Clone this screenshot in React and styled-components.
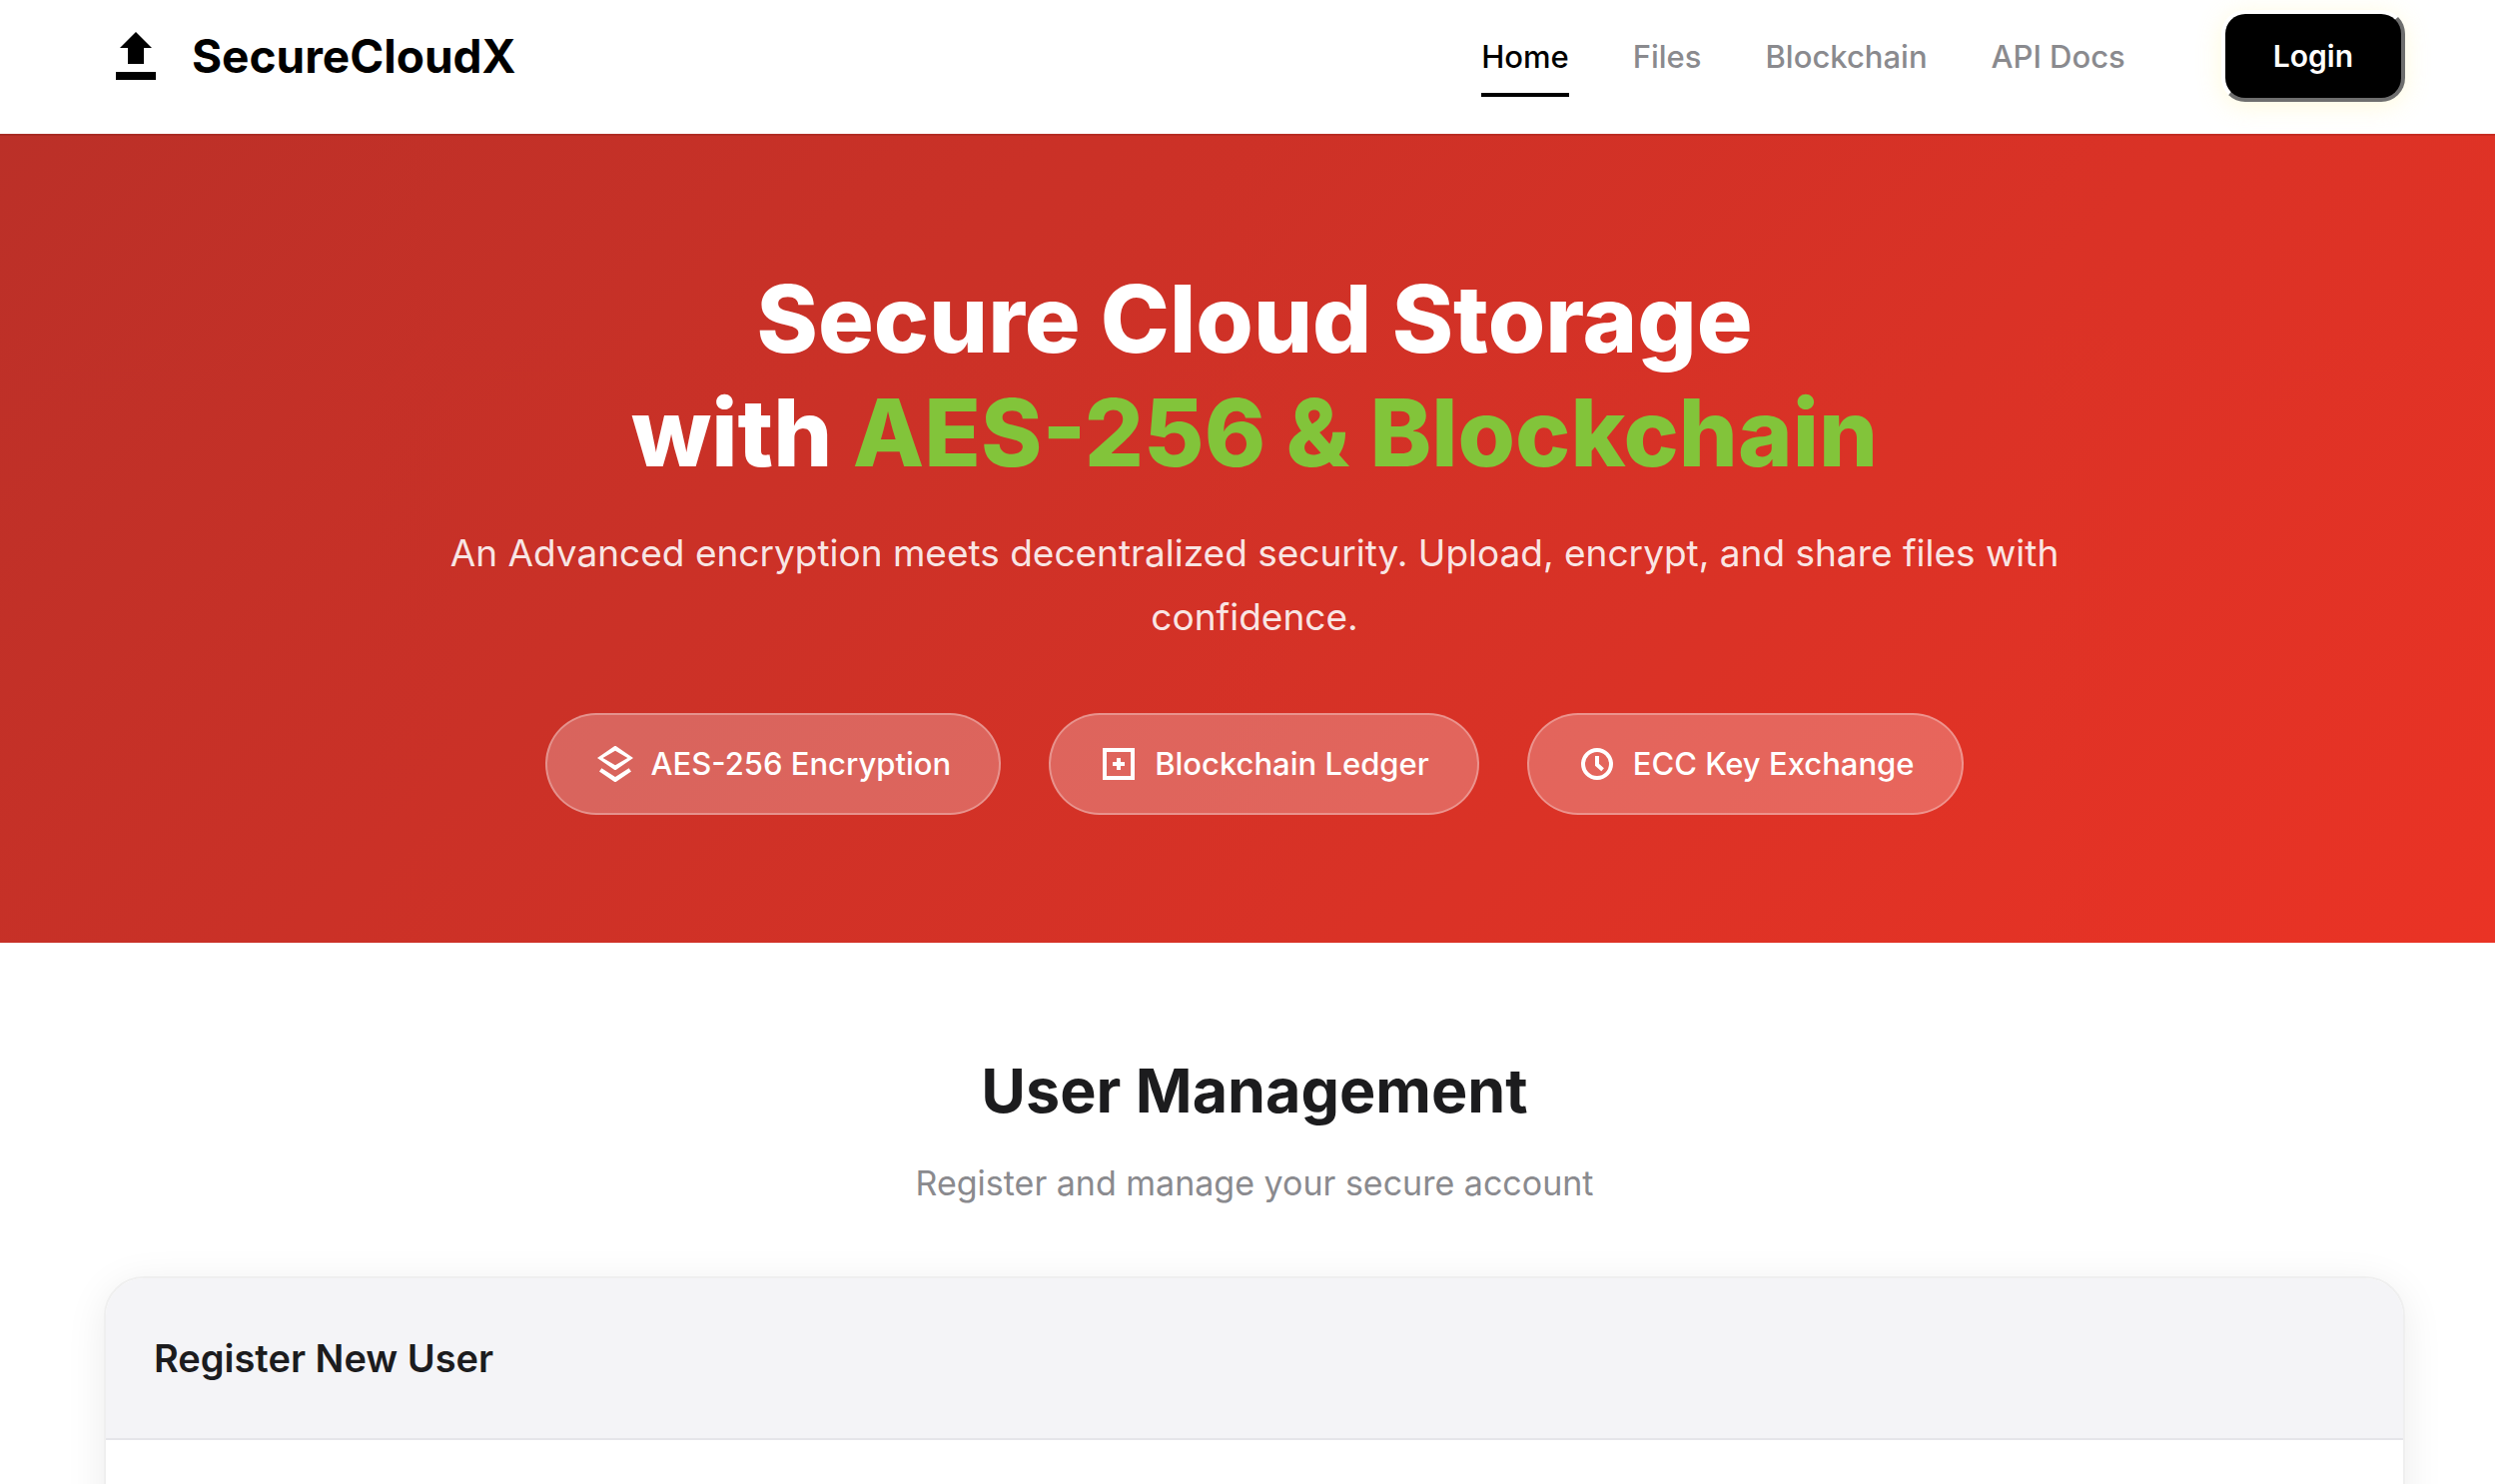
import React from "react";
import styled, { createGlobalStyle } from "styled-components";

function App() {
    return (
        <Page>
            <GlobalStyle />
            <Header>
                <Logo href="#home">
                    <LogoIcon />
                    <span>SecureCloudX</span>
                </Logo>
                <Menu>
                    <Nav>
                        <NavLink href="#home" $active>Home</NavLink>
                        <NavLink href="#files">Files</NavLink>
                        <NavLink href="#blockchain">Blockchain</NavLink>
                        <NavLink href="#docs">API Docs</NavLink>
                    </Nav>
                    <LoginButton type="button">Login</LoginButton>
                </Menu>
            </Header>
            <Hero>
                <HeroTitle>
                    Secure Cloud Storage
                    <br />
                    with <Highlight>AES-256 &amp; Blockchain</Highlight>
                </HeroTitle>
                <HeroText>
                    An Advanced encryption meets decentralized security. Upload, encrypt, and share files with confidence.
                </HeroText>
                <Features>
                    <Feature>
                        <LayersIcon />
                        <span>AES-256 Encryption</span>
                    </Feature>
                    <Feature>
                        <LedgerIcon />
                        <span>Blockchain Ledger</span>
                    </Feature>
                    <Feature>
                        <ClockIcon />
                        <span>ECC Key Exchange</span>
                    </Feature>
                </Features>
            </Hero>
            <Section>
                <SectionTitle>User Management</SectionTitle>
                <SectionText>Register and manage your secure account</SectionText>
                <Card>
                    <CardHeader>
                        <CardTitle>Register New User</CardTitle>
                    </CardHeader>
                    <CardBody />
                </Card>
            </Section>
        </Page>
    );
}

export default App;

function LogoIcon() {
    return (
        <svg width="64" height="64" viewBox="0 0 32 32" fill="currentColor" aria-hidden="true">
            <path d="M16 4l8 8h-4v8h-8v-8H8l8-8zM6 24h20v4H6v-4z" />
        </svg>
    );
}

function LayersIcon() {
    return (
        <svg width="40" height="40" viewBox="0 0 20 20" fill="currentColor" aria-hidden="true">
            <path
                fillRule="evenodd"
                d="M9.7 1h.6L19 7l-8.7 6h-.6L1 7l8.7-6zM10 3.4L3.8 7l6.2 3.6L16.2 7 10 3.4z"
            />
            <path d="M3.2 12.1L10 16.5l6.8-4.4 1.2 1.7L10.3 19h-.6L2 13.8l1.2-1.7z" />
        </svg>
    );
}

function LedgerIcon() {
    return (
        <svg width="40" height="40" viewBox="0 0 20 20" fill="none" stroke="currentColor" strokeWidth="2" aria-hidden="true">
            <path d="M3 3h14v14H3V3zM7 10h6M10 7v6" />
        </svg>
    );
}

function ClockIcon() {
    return (
        <svg width="40" height="40" viewBox="0 0 20 20" fill="none" stroke="currentColor" strokeWidth="2" aria-hidden="true">
            <circle cx="10" cy="10" r="7" />
            <path d="M10 6v4.4l2.8 2.5" />
        </svg>
    );
}

const GlobalStyle = createGlobalStyle`
    * {
        box-sizing: border-box;
        margin: 0;
        padding: 0;
    }

    body {
        background: #ffffff;
        color: #1c1c1e;
        font-family: Inter, "Liberation Sans", sans-serif;
        -webkit-font-smoothing: antialiased;
    }
`;

const Page = styled.div`
    height: 100vh;
    overflow: hidden;
`;

const Header = styled.header`
    display: flex;
    align-items: center;
    justify-content: space-between;
    height: 134px;
    padding: 0 90px 22px 104px;
    background: #ffffff;
`;

const Logo = styled.a`
    display: flex;
    align-items: center;
    gap: 24px;
    color: #000000;
    font-size: 46px;
    font-weight: 700;
    text-decoration: none;
`;

const Menu = styled.div`
    display: flex;
    align-items: center;
    gap: 96px;
`;

const Nav = styled.nav`
    display: flex;
    gap: 64px;
`;

const NavLink = styled.a`
    padding: 20px 0 14px;
    border-bottom: 4px solid ${(props) => (props.$active ? "#000000" : "transparent")};
    color: ${(props) => (props.$active ? "#000000" : "#8a8a8e")};
    font-size: 31px;
    font-weight: 500;
    line-height: 44px;
    text-decoration: none;
`;

const LoginButton = styled.button`
    padding: 18px 48px;
    border: 4px solid;
    border-color: #ffffff #6e6e6e #6e6e6e #ffffff;
    border-radius: 24px;
    background: #000000;
    box-shadow: 0 4px 24px rgba(255, 240, 140, 0.3);
    color: #ffffff;
    font-family: inherit;
    font-size: 30px;
    font-weight: 600;
    line-height: 48px;
    cursor: pointer;
`;

const Hero = styled.section`
    display: flex;
    flex-direction: column;
    align-items: center;
    padding: 126px 90px 128px 104px;
    border-top: 2px solid rgba(0, 0, 0, 0.1);
    background: linear-gradient(135deg, #bb3028 0%, #ea3325 100%) border-box;
    color: #ffffff;
    text-align: center;
`;

const HeroTitle = styled.h1`
    font-size: 93px;
    font-weight: 800;
    line-height: 114px;
`;

const Highlight = styled.span`
    color: #82c43a;
`;

const HeroText = styled.p`
    max-width: 1680px;
    margin-top: 32px;
    color: rgba(255, 255, 255, 0.9);
    font-size: 37px;
    line-height: 64px;
`;

const Features = styled.div`
    display: flex;
    gap: 48px;
    margin-top: 64px;
`;

const Feature = styled.div`
    display: flex;
    align-items: center;
    gap: 16px;
    padding: 24px 48px;
    border: 2px solid rgba(255, 255, 255, 0.3);
    border-radius: 51px;
    background: rgba(255, 255, 255, 0.25);
    font-size: 31px;
    font-weight: 500;
    line-height: 50px;
`;

const Section = styled.section`
    padding: 112px 90px 0 104px;
`;

const SectionTitle = styled.h2`
    font-size: 61px;
    font-weight: 700;
    line-height: 72px;
    text-align: center;
`;

const SectionText = styled.p`
    margin-top: 28px;
    color: #8a8a8e;
    font-size: 34px;
    line-height: 58px;
    text-align: center;
`;

const Card = styled.article`
    margin-top: 64px;
    overflow: hidden;
    border: 2px solid #efefef;
    border-radius: 40px;
    background: #ffffff;
    box-shadow: 0 8px 40px rgba(0, 0, 0, 0.08);
`;

const CardHeader = styled.header`
    padding: 48px;
    border-bottom: 2px solid #e5e5ea;
    background: #f4f4f7;
`;

const CardTitle = styled.h3`
    font-size: 38px;
    font-weight: 600;
    line-height: 64px;
`;

const CardBody = styled.div`
    height: 400px;
`;
